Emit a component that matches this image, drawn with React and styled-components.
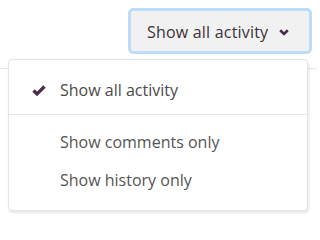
import React, { useState } from 'react';
import styled, { createGlobalStyle } from 'styled-components';

const GlobalStyle = createGlobalStyle`
  body {
    margin: 0;
    background: #ffffff;
    font-family: 'Open Sans', 'Noto Sans', sans-serif;
  }
`;

const Page = styled.div`
  position: relative;
  width: 317px;
  height: 218px;
  overflow: hidden;
`;

const Header = styled.div`
  display: flex;
  justify-content: flex-end;
  align-items: flex-start;
  height: 69px;
  box-sizing: border-box;
  padding: 8px 5px 0 0;
  border-bottom: 1px solid #e8e8e8;
`;

const ToggleButton = styled.button`
  display: flex;
  align-items: center;
  justify-content: space-between;
  width: 184px;
  height: 46px;
  box-sizing: border-box;
  padding: 2px 20px 0 16px;
  border: 3px solid #bddcf8;
  border-radius: 5px;
  background: #f1f1f1;
  color: #3a323a;
  font-family: inherit;
  font-size: 16px;
  letter-spacing: 0.2px;
  cursor: pointer;
`;

const Menu = styled.ul`
  position: absolute;
  top: 59px;
  left: 8px;
  width: 300px;
  box-sizing: border-box;
  margin: 0;
  padding: 11px 0;
  list-style: none;
  background: #ffffff;
  border: 1px solid #e4e4e4;
  border-radius: 4px;
  box-shadow: 1px 2px 3px rgba(0, 0, 0, 0.1);
`;

const Item = styled.li`
  display: flex;
  align-items: center;
  height: 38px;
  padding-left: 23px;
  color: ${props => (props.active ? '#4a4a4a' : '#555555')};
  font-size: 16px;
  cursor: pointer;
`;

const IconSlot = styled.span`
  display: flex;
  align-items: center;
  width: 28px;
  color: #4a2b48;
`;

const Separator = styled.li`
  height: 1px;
  margin: 5px 0 8px;
  background: #e6e6e6;
`;

const Check = () => (
  <svg width="14" height="11" viewBox="0 0 14 11" fill="none">
    <path d="M1.5 5.5 L5 9 L12.5 1.5" stroke="currentColor" strokeWidth="3.2" />
  </svg>
);

const Chevron = () => (
  <svg width="10" height="7" viewBox="0 0 10 7" fill="none">
    <path d="M1.2 1.3 L5 5 L8.8 1.3" stroke="#4a2b48" strokeWidth="2.6" />
  </svg>
);

const options = ['Show all activity', 'Show comments only', 'Show history only'];

const App = () => {
  const [selected, setSelected] = useState(options[0]);

  return (
    <Page>
      <GlobalStyle />
      <Header>
        <ToggleButton type="button">
          {selected}
          <Chevron />
        </ToggleButton>
      </Header>
      <Menu>
        {options.map((option, i) => (
          <React.Fragment key={option}>
            <Item active={option === selected} onClick={() => setSelected(option)}>
              <IconSlot>{option === selected && <Check />}</IconSlot>
              {option}
            </Item>
            {i === 0 && <Separator />}
          </React.Fragment>
        ))}
      </Menu>
    </Page>
  );
};

export default App;
